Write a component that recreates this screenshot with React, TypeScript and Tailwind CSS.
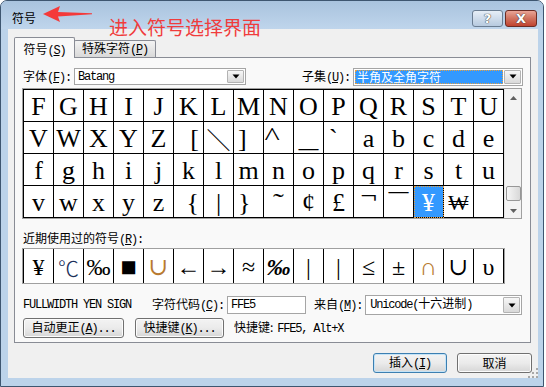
import React from 'react';

const mono = "[font-family:'Liberation_Mono','Noto_Sans_CJK_SC',monospace] tracking-[-1.2px]";
const serif = "[font-family:'Liberation_Serif','DejaVu_Serif','Noto_Sans_CJK_SC',serif]";

type Cell = { c: string; cls?: string; g?: string; sel?: boolean };

const plain = (s: string): Cell[] => s.split('').map((c) => ({ c }));

const rows: Cell[][] = [
  plain('FGHIJKLMNOPQRSTU'),
  [
    ...plain('VWXYZ'),
    { c: '[', cls: 'justify-end pr-[4px]' },
    { c: '＼', g: "text-[24px] [font-family:'Noto_Sans_CJK_SC',sans-serif] font-light" },
    { c: ']', cls: 'justify-start pl-[4px]' },
    { c: '^', cls: 'justify-start pl-[2px]', g: 'scale-x-125 -translate-y-[2px]' },
    { c: '_', g: 'scale-x-150' },
    { c: '`', cls: 'justify-start pl-[5px]' },
    ...plain('abcde'),
  ],
  plain('fghijklmnopqrstu'),
  [
    ...plain('vwxyz'),
    { c: '{', cls: 'justify-end pr-[4px]' },
    { c: '|' },
    { c: '}', cls: 'justify-start pl-[4px]' },
    { c: '˜', g: 'scale-x-125' },
    { c: '¢' },
    { c: '£' },
    { c: '¬', cls: 'items-start !pt-0', g: 'text-[20px] scale-x-150' },
    { c: '¯', g: 'scale-x-150' },
    { c: '¥', sel: true },
    { c: '₩', g: 'text-[22px]' },
    { c: '' },
  ],
];

const recent: Cell[] = [
  { c: '¥' },
  { c: '℃', g: "text-[21px] font-light text-[#1c2f5a] [font-family:'Noto_Sans_CJK_SC',sans-serif]" },
  { c: '‰' },
  { c: '■', g: 'text-[27px]' },
  { c: '∪', g: 'text-[#b87a30]' },
  { c: '←' },
  { c: '→' },
  { c: '≈' },
  { c: '‰', g: 'italic font-bold' },
  { c: '|' },
  { c: '|' },
  { c: '≤' },
  { c: '±' },
  { c: '∩', g: 'text-[#b87a30]' },
  { c: '∪' },
  { c: 'υ' },
];

function Acc({ k, tail = '' }: { k: string; tail?: string }) {
  return (
    <span className={mono}>
      (<span className="underline underline-offset-[1px]">{k}</span>){tail}
    </span>
  );
}

function DropBtn() {
  return (
    <div className="w-[17px] h-full border border-[#b3b3b3] rounded-[1px] bg-linear-to-b from-[#f7f7f7] to-[#d9d9d9] flex items-center justify-center">
      <svg width="8" height="5" viewBox="0 0 8 5">
        <path d="M0.5 0.5h7L4 4.5z" fill="#000" />
      </svg>
    </div>
  );
}

function Combo({ className, children }: { className: string; children: React.ReactNode }) {
  return (
    <div className={`flex items-stretch border border-[#a5a5a5] bg-white p-px ${className}`}>
      <div className="flex-1 min-w-0 flex items-center">{children}</div>
      <DropBtn />
    </div>
  );
}

function Btn({ className, children, primary }: { className: string; children: React.ReactNode; primary?: boolean }) {
  return (
    <div
      className={`h-[20px] rounded-[3px] border flex items-center justify-center bg-linear-to-b from-[#f3f3f3] via-[#ebebeb] to-[#d6d6d6] ${
        primary ? 'border-[#3c7fb1] shadow-[inset_0_0_0_1px_#c4e3f7]' : 'border-[#707070] shadow-[inset_0_0_0_1px_#fcfcfc]'
      } ${className}`}
    >
      {children}
    </div>
  );
}

function Scrollbar() {
  return (
    <div className="w-[17px] flex flex-col bg-[#f3f3f3] border-l border-[#e4e4e4]">
      <div className="h-[17px] flex items-center justify-center">
        <svg width="7" height="4" viewBox="0 0 7 4">
          <path d="M0 4L3.5 0L7 4z" fill="#606060" />
        </svg>
      </div>
      <div className="flex-1 flex flex-col justify-end items-center">
        <div className="w-[15px] h-[15px] rounded-[2px] border border-[#979797] bg-linear-to-r from-[#f6f6f6] to-[#d8d8d8]" />
      </div>
      <div className="h-[17px] flex items-center justify-center pt-[3px]">
        <svg width="7" height="4" viewBox="0 0 7 4">
          <path d="M0 0L3.5 4L7 0z" fill="#606060" />
        </svg>
      </div>
    </div>
  );
}

function CharGrid() {
  return (
    <div className="flex w-fit border border-[#a0a0a0] bg-white">
      <div className={`border-l border-t border-black flex flex-col text-[26px] ${serif}`}>
        {rows.map((r, i) => (
          <div key={i} className="flex">
            {r.map((cell, j) => (
              <div
                key={j}
                className={`w-[30px] h-[32px] border-r border-b border-black flex items-center justify-center pt-[3px] ${
                  cell.cls ?? ''
                } ${cell.sel ? 'bg-[#3399ff] text-white outline-1 outline-dotted outline-[#e8a040] -outline-offset-1' : ''}`}
              >
                <span className={`inline-block leading-none ${cell.g ?? ''}`}>{cell.c}</span>
              </div>
            ))}
          </div>
        ))}
      </div>
      <Scrollbar />
    </div>
  );
}

function RecentRow() {
  return (
    <div className="flex w-fit border border-[#a0a0a0] bg-white">
      <div className={`flex border-l border-black text-[24px] ${serif}`}>
        {recent.map((cell, j) => (
          <div key={j} className="w-[30px] h-[34px] border-r border-black flex items-center justify-center pt-[2px]">
            <span className={`inline-block leading-none ${cell.g ?? ''}`}>{cell.c}</span>
          </div>
        ))}
      </div>
    </div>
  );
}

export default function App() {
  return (
    <div className="w-[546px] h-[387px] bg-white relative overflow-hidden text-[12px] text-black [font-family:'Noto_Sans_CJK_SC',sans-serif]">
      <div className="w-[544px] h-[387px] border border-[#3e5670] rounded-t-[7px] bg-[#bcd3ea] flex flex-col pl-[7px] pr-[5px] pb-[8px]">
        {/* title bar */}
        <div className="h-[28px] -ml-[7px] -mr-[5px] pl-[11px] pr-[6px] flex items-start rounded-t-[6px] bg-linear-to-b from-[#a9c3de] to-[#bfd5ec]">
          <span className="mt-[10px] leading-[14px]">符号</span>
          <div className="ml-auto mt-[9px] flex gap-[2px]">
            <div className="w-[31px] h-[17px] rounded-[3px] border border-[#6a7d92] bg-linear-to-b from-[#e6eef7] to-[#b7cadf] flex items-center justify-center text-white font-bold text-[13px] leading-none [text-shadow:0_0_1px_#333,0_0_1px_#333] [font-family:'DejaVu_Sans',sans-serif]">
              ?
            </div>
            <div className="w-[32px] h-[17px] rounded-[3px] border border-[#6b2c24] bg-linear-to-b from-[#e9a597] via-[#d0725f] to-[#c0422f] flex items-center justify-center text-white font-bold text-[13px] leading-none [text-shadow:0_0_1px_#333,0_0_1px_#333] [font-family:'DejaVu_Sans',sans-serif]">
              X
            </div>
          </div>
        </div>

        {/* client area */}
        <div className="flex-1 bg-[#f0f0f0] relative pl-[6px] pt-[8px]">
          {/* tabs */}
          <div className="flex items-start h-[20px]">
            <div className="relative z-10 w-[61px] h-[21px] border border-b-0 border-[#898c95] rounded-t-[2px] bg-[#f9f9f9] flex items-start justify-center pt-[4px] leading-[14px]">
              <span>
                符号<Acc k="S" />
              </span>
            </div>
            <div className="-ml-px mt-[3px] w-[82px] h-[17px] border border-b-0 border-[#898c95] rounded-t-[2px] bg-linear-to-b from-[#f3f3f3] to-[#d9d9d9] flex items-center justify-center leading-[14px]">
              <span>
                特殊字符<Acc k="P" />
              </span>
            </div>
          </div>

          {/* panel */}
          <div className="w-[517px] h-[286px] border border-[#898c95] bg-[#f9f9f9] px-[7px] pt-[10px] flex flex-col">
            <div className="h-[17px] flex items-center justify-between pl-px">
              <div className="flex items-center h-full">
                <span className="leading-[14px]">
                  字体<Acc k="F" tail=":" />
                </span>
                <Combo className="ml-[3px] w-[172px] h-[17px]">
                  <span className={`pl-[2px] text-[12px] leading-none ${mono}`}>Batang</span>
                </Combo>
              </div>
              <div className="flex items-center h-[18px]">
                <span className="leading-[14px]">
                  子集<Acc k="U" tail=":" />
                </span>
                <Combo className="ml-[3px] w-[170px] h-[18px]">
                  <div className="h-full flex-1 mr-px bg-[#3399ff] outline-1 outline-dotted outline-[#e8a040] -outline-offset-1 flex items-center pl-[2px] text-white leading-none">
                    半角及全角字符
                  </div>
                </Combo>
              </div>
            </div>

            <div className="mt-[3px]">
              <CharGrid />
            </div>

            <div className="mt-[12px] pl-px leading-[14px]">
              近期使用过的符号<Acc k="R" tail=":" />
            </div>

            <div className="mt-[1px]">
              <RecentRow />
            </div>

            <div className="mt-[11px] h-[20px] flex items-center pl-px">
              <span className={`w-[129px] leading-none ${mono}`}>FULLWIDTH YEN SIGN</span>
              <span className="leading-[14px]">
                字符代码<Acc k="C" tail=":" />
              </span>
              <div className="ml-[3px] w-[79px] h-[18px] border border-[#a5a5a5] bg-white flex items-center pl-[3px]">
                <span className={`leading-none ${mono}`}>FFE5</span>
              </div>
              <span className="ml-[8px] leading-[14px]">
                来自<Acc k="M" tail=":" />
              </span>
              <Combo className="ml-[3px] w-[157px] h-[20px]">
                <span className={`pl-[3px] leading-none ${mono}`}>
                  Unicode(<span className="tracking-normal">十六进制</span>)
                </span>
              </Combo>
            </div>

            <div className="mt-[3px] h-[20px] flex items-center pl-px">
              <Btn className="w-[101px]">
                <span className="leading-[14px]">
                  自动更正<Acc k="A" tail="..." />
                </span>
              </Btn>
              <Btn className="ml-[11px] w-[89px]">
                <span className="leading-[14px]">
                  快捷键<Acc k="K" tail="..." />
                </span>
              </Btn>
              <span className="ml-[10px] leading-[14px]">
                快捷键:<span className={`ml-[4px] ${mono}`}>FFE5, Alt+X</span>
              </span>
            </div>
          </div>

          {/* dialog buttons */}
          <div className="mt-[10px] flex justify-end gap-[10px] pr-[6px]">
            <Btn primary className="w-[74px]">
              <span className="leading-[14px]">
                插入<Acc k="I" />
              </span>
            </Btn>
            <Btn className="w-[75px]">
              <span className="leading-[14px]">取消</span>
            </Btn>
          </div>

          <svg className="absolute right-0 bottom-0" width="11" height="11" viewBox="0 0 11 11">
            {[
              [9, 1],
              [9, 5],
              [5, 5],
              [9, 9],
              [5, 9],
              [1, 9],
            ].map(([x, y], i) => (
              <rect key={i} x={x} y={y} width="2" height="2" fill="#a8a8a8" />
            ))}
          </svg>
        </div>
      </div>

      {/* red annotation */}
      <svg className="absolute left-[42px] top-[4px]" width="52" height="20" viewBox="0 0 52 20">
        <path d="M1 10L18 2L16 8L50 9.2L50 10.2L16 12.5L18 18Z" fill="#f43a3a" />
      </svg>
      <div className="absolute left-[109px] top-[17px] text-[19px] leading-[19px] text-[#f03c3c]">进入符号选择界面</div>
    </div>
  );
}
